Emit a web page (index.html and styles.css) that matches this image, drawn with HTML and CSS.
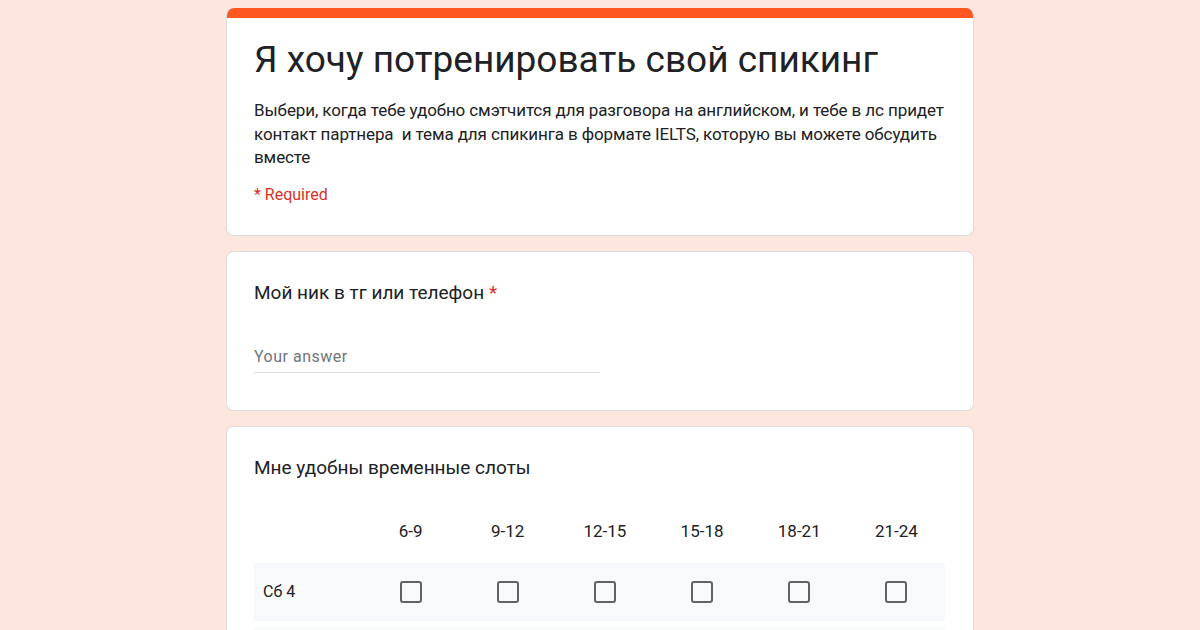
FILE: index.html
```html
<!DOCTYPE html>
<html lang="ru">
<head>
<meta charset="utf-8">
<title>Я хочу потренировать свой спикинг</title>
<link rel="stylesheet" href="styles.css">
</head>
<body>
<main class="form">
  <section class="card header-card">
    <div class="accent"></div>
    <div class="header-body">
      <h1 class="title">Я хочу потренировать свой спикинг</h1>
      <p class="desc">Выбери, когда тебе удобно смэтчится для разговора на английском, и тебе в лс придет контакт партнера&nbsp; и тема для спикинга в формате IELTS, которую вы можете обсудить вместе</p>
      <div class="required">* Required</div>
    </div>
  </section>

  <section class="card question">
    <div class="q-title">Мой ник в тг или телефон <span class="star">*</span></div>
    <div class="answer">Your answer</div>
  </section>

  <section class="card question grid-card">
    <div class="q-title">Мне удобны временные слоты</div>
    <div class="grid">
      <div class="grid-head">
        <div class="cell label"></div>
        <div class="cell">6-9</div>
        <div class="cell">9-12</div>
        <div class="cell">12-15</div>
        <div class="cell">15-18</div>
        <div class="cell">18-21</div>
        <div class="cell">21-24</div>
      </div>
      <div class="grid-row">
        <div class="cell label">Сб 4</div>
        <div class="cell"><span class="box"></span></div>
        <div class="cell"><span class="box"></span></div>
        <div class="cell"><span class="box"></span></div>
        <div class="cell"><span class="box"></span></div>
        <div class="cell"><span class="box"></span></div>
        <div class="cell"><span class="box"></span></div>
      </div>
      <div class="grid-row">
        <div class="cell label"></div>
        <div class="cell"><span class="box"></span></div>
        <div class="cell"><span class="box"></span></div>
        <div class="cell"><span class="box"></span></div>
        <div class="cell"><span class="box"></span></div>
        <div class="cell"><span class="box"></span></div>
        <div class="cell"><span class="box"></span></div>
      </div>
    </div>
  </section>
</main>
</body>
</html>
```

FILE: styles.css
```css
html, body {
  margin: 0;
  padding: 0;
}
body {
  background: #fde6de;
  font-family: Roboto, "Noto Sans", Arial, sans-serif;
  color: #202124;
  height: 630px;
  overflow: hidden;
}
.form {
  width: 748px;
  margin: 8px auto 0;
  display: flex;
  flex-direction: column;
  gap: 15px;
}
.card {
  background: #fff;
  border: 1px solid #dadce0;
  border-radius: 8px;
  box-sizing: border-box;
}
.header-card {
  overflow: hidden;
  border-top: none;
}
.accent {
  height: 10px;
  background: #ff5722;
}
.header-body {
  padding: 20px 27px 30px;
}
.title {
  margin: 0;
  font-family: Roboto, "Open Sans", sans-serif;
  font-weight: 400;
  font-size: 37px;
  line-height: 44px;
  color: #202124;
}
.desc {
  margin: 17px 0 0;
  font-size: 17px;
  line-height: 23.5px;
  color: #202124;
  letter-spacing: -0.1px;
}
.required {
  margin-top: 15px;
  font-size: 16px;
  line-height: 20px;
  color: #d93025;
}
.question {
  padding: 29px 27px 37px;
}
.q-title {
  font-size: 19px;
  line-height: 24px;
  color: #202124;
}
.star {
  color: #d93025;
}
.answer {
  margin-top: 42px;
  width: 346px;
  font-size: 16px;
  letter-spacing: 0.5px;
  line-height: 20px;
  color: #70757a;
  padding-bottom: 5px;
  border-bottom: 1px solid #e0e0e0;
}
.grid-card {
  padding-bottom: 0;
}
.grid {
  margin-top: 31px;
  display: flex;
  flex-direction: column;
  gap: 6px;
  width: 691px;
}
.grid-head, .grid-row {
  display: grid;
  grid-template-columns: 108px repeat(6, 1fr);
  align-items: center;
}
.grid-head {
  height: 40px;
  margin-bottom: 6px;
  font-size: 17px;
  color: #202124;
}
.grid-row {
  height: 58px;
  background: #f8f9fa;
  font-size: 16px;
}
.cell {
  display: flex;
  justify-content: center;
  align-items: center;
  height: 100%;
}
.cell.label {
  justify-content: flex-start;
  padding-left: 9px;
}
.box {
  width: 18px;
  height: 18px;
  border: 2px solid #5f6368;
  border-radius: 3px;
}
```
